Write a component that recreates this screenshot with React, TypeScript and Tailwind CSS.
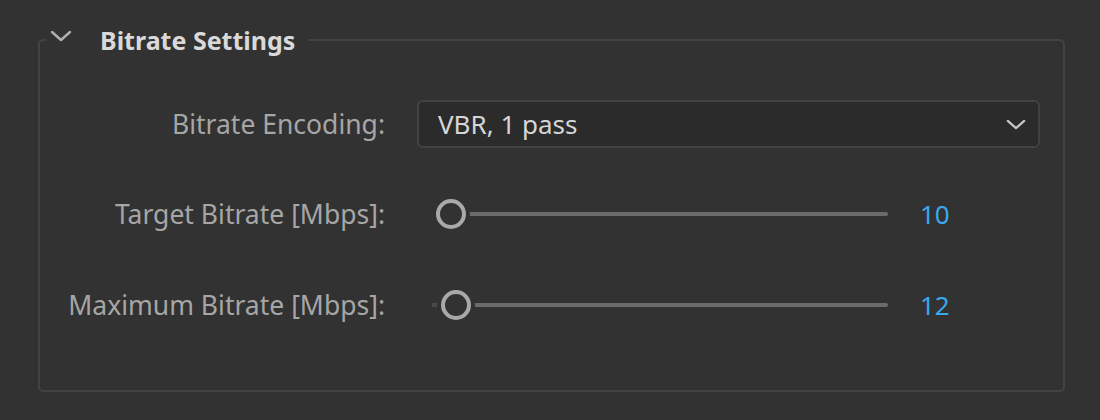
import { useState } from 'react';

const labelCls = 'w-[377px] shrink-0 text-right text-[26.5px] leading-none text-[#a6a6a6] pr-[32px]';

function Chevron({ className, w = 22, h = 12 }: { className?: string; w?: number; h?: number }) {
  return (
    <svg viewBox="0 0 22 12" width={w} height={h} className={className} fill="none">
      <path d="M2 2l9 8 9-8" stroke="currentColor" strokeWidth={2.4} strokeLinecap="round" strokeLinejoin="round" />
    </svg>
  );
}

function Slider({ value, min, max }: { value: number; min: number; max: number }) {
  const pct = (value - min) / (max - min);
  // thumb travels inside the track, 15px from each end
  const left = `calc(15px + ${pct} * (100% - 30px))`;
  return (
    <div className="flex items-center ml-[15px]">
      <div className="relative w-[456px] h-[30px] flex items-center">
        <div className="h-[4px] w-full bg-[#6b6b6b] rounded-full" />
        <div
          className="absolute top-1/2 left-0 h-[4px] -translate-y-1/2 bg-[#4a4a4a]"
          style={{ width: left }}
        />
        <div
          className="absolute top-1/2 -translate-y-1/2 -translate-x-1/2 w-[30px] h-[30px] rounded-full bg-[#323232] border-[4px] border-[#a9a9a9] ring-[4px] ring-[#323232]"
          style={{ left }}
        />
      </div>
      <span className="ml-[32px] text-[26px] leading-none text-[#38a9ee]">{value}</span>
    </div>
  );
}

export default function App() {
  const [encoding] = useState('VBR, 1 pass');

  return (
    <div
      className="w-[1100px] h-[420px] bg-[#323232] pt-[25px] pl-[38px]"
      style={{ fontFamily: '"Noto Sans", "Open Sans", sans-serif' }}
    >
      <fieldset className="w-[1027px] h-[367px] border-2 border-[#434343] rounded-[5px]">
        <legend className="ml-[6px] pl-[4px] pr-[13px] flex items-center">
          <Chevron className="text-[#b0b0b0] mr-[28px] -translate-y-[4px]" />
          <span className="text-[25px] font-bold text-[#d9d9d9] leading-[30px]">Bitrate Settings</span>
        </legend>

        <div className="flex flex-col mt-[45px]">
          <div className="flex items-center h-[48px]">
            <div className={labelCls}>Bitrate Encoding:</div>
            <button className="w-[623px] h-[48px] flex items-center justify-between pl-[19px] pr-[12px] bg-[#2b2b2b] border-2 border-[#424242] rounded-[6px] text-[26px] text-[#d6d6d6]">
              <span className="leading-none">{encoding}</span>
              <Chevron className="text-[#c8c8c8]" w={20} h={11} />
            </button>
          </div>

          <div className="flex items-center h-[30px] mt-[51px]">
            <div className={labelCls}>Target Bitrate [Mbps]:</div>
            <Slider value={10} min={8.4} max={180} />
          </div>

          <div className="flex items-center h-[30px] mt-[61px]">
            <div className={labelCls}>Maximum Bitrate [Mbps]:</div>
            <Slider value={12} min={8.4} max={180} />
          </div>
        </div>
      </fieldset>
    </div>
  );
}
